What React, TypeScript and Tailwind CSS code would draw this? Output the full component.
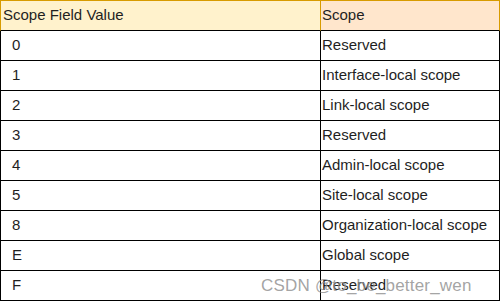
const rows: [string, string][] = [
  ["0", "Reserved"],
  ["1", "Interface-local scope"],
  ["2", "Link-local scope"],
  ["3", "Reserved"],
  ["4", "Admin-local scope"],
  ["5", "Site-local scope"],
  ["8", "Organization-local scope"],
  ["E", "Global scope"],
  ["F", "Reserved"],
];

export default function App() {
  return (
    <div className="relative w-[501px] h-[301px] bg-white font-['Liberation_Sans',Arial,sans-serif] text-[15px] text-[#1f1f1f]">
      <div className="w-[500px]">
        {/* header row */}
        <div className="grid grid-cols-[321px_179px] h-[31px]">
          <div className="flex items-center pl-[2px] bg-[#fff2cc] border-t border-l border-r border-t-[#d79b00] border-l-[#d79b00] border-r-[#d79b00] border-b border-b-black">
            Scope Field Value
          </div>
          <div className="flex items-center pl-[1px] bg-[#ffe6cc] border-t border-r border-[#d79b00] border-b border-b-black">
            Scope
          </div>
        </div>
        {rows.map(([value, scope]) => (
          <div key={value} className="grid grid-cols-[321px_179px] h-[30px]">
            <div className="flex items-center pl-[11px] border-l border-r border-b border-black">
              {value}
            </div>
            <div className="flex items-center pl-[1px] border-r border-b border-black">
              {scope}
            </div>
          </div>
        ))}
      </div>
      {/* watermark */}
      <div className="absolute left-[261px] top-[273px] text-[17px] text-[#8c8c8c]/80 tracking-[0.2px] whitespace-nowrap">
        CSDN @to_be_better_wen
      </div>
    </div>
  );
}
